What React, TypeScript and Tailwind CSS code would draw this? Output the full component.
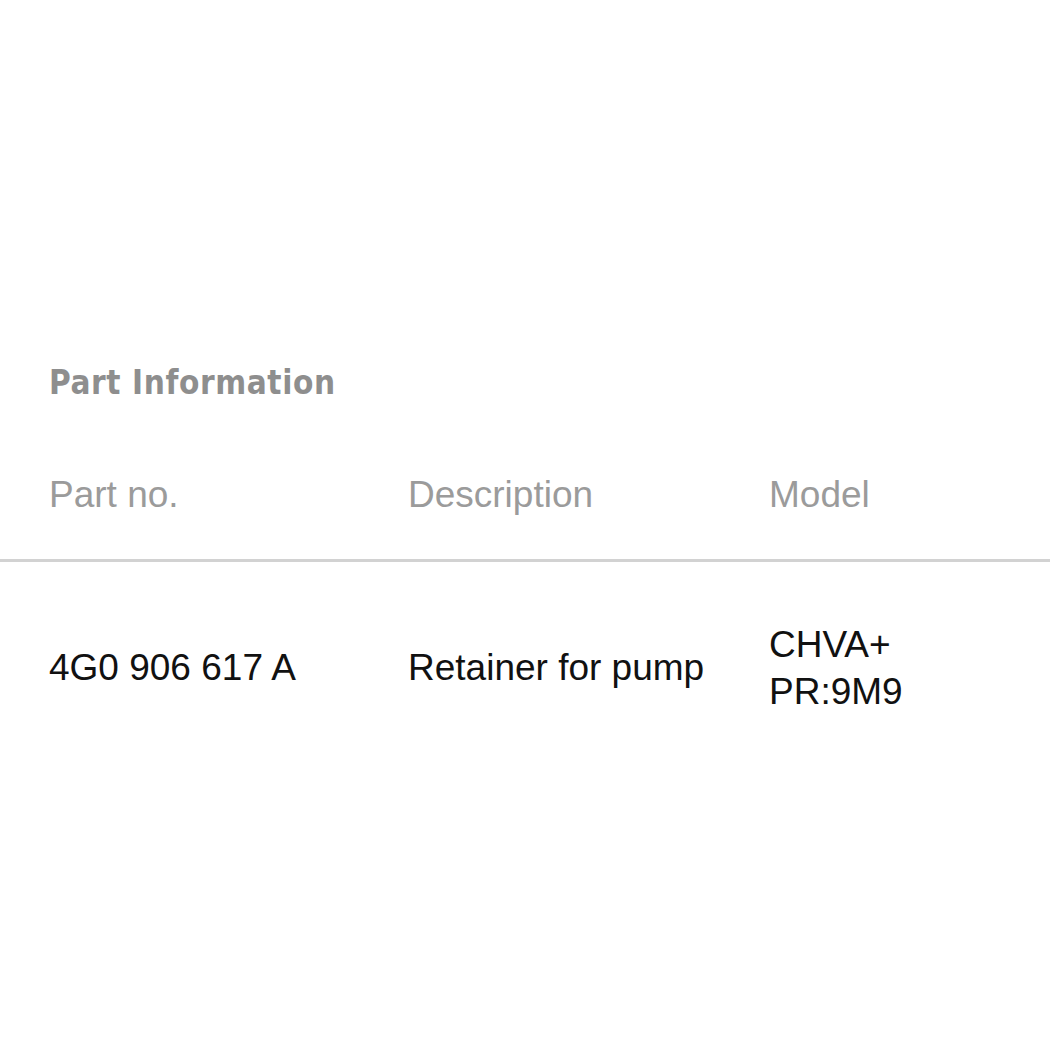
import React from 'react';

type PartRow = {
    partNo: string;
    description: string;
    model: string[];
};

const rows: PartRow[] = [
    {partNo: "4G0 906 617 A", description: "Retainer for pump", model: ["CHVA+", "PR:9M9"]},
];

export default function App() {
    return (
        <div className="min-h-[1050px] bg-white pt-[363px] font-['Liberation_Sans',Arial,sans-serif]">
            <h2 className="pl-[49px] text-[33px] leading-[40px] font-bold tracking-[0.6px] text-[#8e8e8e] font-['DejaVu_Sans_Condensed','Liberation_Sans',sans-serif]">
                Part Information
            </h2>

            <div className="mt-[70px] flex pl-[49px] pb-[42px] text-[37px] leading-[44px] text-[#9b9b9b]">
                <div className="w-[359px]">Part no.</div>
                <div className="w-[361px]">Description</div>
                <div>Model</div>
            </div>
            <div className="h-[3px] bg-[#d2d2d2]"/>

            {rows.map((row) => (
                <div key={row.partNo} className="flex items-center pl-[49px] py-[59px] text-[37px] text-[#111111]">
                    <div className="w-[359px] leading-[44px]">{row.partNo}</div>
                    <div className="w-[361px] leading-[44px]">{row.description}</div>
                    <div className="w-[200px] leading-[47px]">
                        {row.model.map((m) => (
                            <div key={m}>{m}</div>
                        ))}
                    </div>
                </div>
            ))}
        </div>
    );
}
